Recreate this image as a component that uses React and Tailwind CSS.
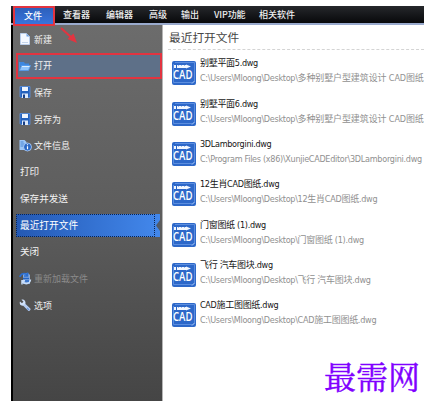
import React from 'react';

const menus = [
  { label: '查看器', width: 'w-[43px]' },
  { label: '编辑器', width: 'w-[43px]' },
  { label: '高级', width: 'w-[32px]' },
  { label: '输出', width: 'w-[33px]' },
  { label: 'VIP功能', width: 'w-[45px]', tracking: 'tracking-[-0.1px]' },
  { label: '相关软件', width: 'w-[50px]' },
];

const files = [
  { name: '别墅平面5.dwg', dir: 'C:\\Users\\Mloong\\Desktop\\', file: '多种别墅户型建筑设计 CAD图纸', tail: 'tracking-[-0.12px]' },
  { name: '别墅平面6.dwg', dir: 'C:\\Users\\Mloong\\Desktop\\', file: '多种别墅户型建筑设计 CAD图纸', tail: 'tracking-[-0.12px]' },
  { name: '3DLamborgini.dwg', dir: 'C:\\Program Files (x86)\\XunjieCADEditor\\', file: '3DLamborgini.dwg' },
  { name: '12生肖CAD图纸.dwg', dir: 'C:\\Users\\Mloong\\Desktop\\', file: '12生肖CAD图纸.dwg' },
  { name: '门窗图纸 (1).dwg', dir: 'C:\\Users\\Mloong\\Desktop\\', file: '门窗图纸 (1).dwg' },
  { name: '飞行 汽车图块.dwg', dir: 'C:\\Users\\Mloong\\Desktop\\', file: '飞行 汽车图块.dwg' },
  { name: 'CAD施工图图纸.dwg', dir: 'C:\\Users\\Mloong\\Desktop\\', file: 'CAD施工图图纸.dwg' },
];

const NewIcon = () => (
  <svg width="12" height="12" viewBox="0 0 12 12">
    <path d="M1.5 .5h6l3 3v8h-9z" fill="#f4f8ff" stroke="#b9cdea" />
    <path d="M7.5 .5v3h3z" fill="#6f9fe0" />
    <path d="M3 9.5h6" stroke="#c3d4ec" />
  </svg>
);

const OpenIcon = () => (
  <svg width="12" height="12" viewBox="0 0 12 12">
    <path d="M1 2h4l1 1.5h4V6H1z" fill="#3d87e0" />
    <path d="M.5 10.5V2M2.5 5.5h9l-2 5H.5z" fill="#8fc3fb" stroke="#4d97ec" strokeWidth=".8" />
    <path d="M3 6.5h7.5" stroke="#d9ecff" />
  </svg>
);

const SaveIcon = () => (
  <svg width="12" height="12" viewBox="0 0 12 12">
    <path d="M1 .5h10v11H2l-1-1z" fill="#2462bd" stroke="#5e9aec" strokeWidth=".7" />
    <path d="M3 1h6v4H3z" fill="#eef5ff" />
    <path d="M3 7.5h6V12H3z" fill="#dce9fb" />
    <path d="M4 8.5h2V12H4z" fill="#173f86" />
  </svg>
);

const InfoIcon = () => (
  <svg width="13" height="13" viewBox="0 0 13 13">
    <path d="M.5 1h5l2 2v8h-7z" fill="#9dc6f7" />
    <path d="M1.5 3h3M1.5 5h4M1.5 7h3" stroke="#3677cb" strokeWidth=".8" />
    <circle cx="8.5" cy="8" r="4" fill="#2866c5" stroke="#b9d5fa" strokeWidth=".8" />
    <path d="M8.5 7.2v3M8.5 5.2v1.1" stroke="#fff" strokeWidth="1.2" />
  </svg>
);

const ReloadIcon = () => (
  <svg width="13" height="13" viewBox="0 0 13 13" fill="none">
    <path d="M4 1h5l2 2v9H4z" fill="#86a9dc" />
    <path d="M1 5C1.500 1.500 6 .5 8 3M8.500 .5V4H5" stroke="#2b6fd2" strokeWidth="1.700" />
    <path d="M11.500 7.500C11 12 6 13 3.500 9.500M3 12.500V8.800H6.500" stroke="#c8defa" strokeWidth="1.500" />
    <path d="M4 6.500h6M6 9h4" stroke="#2365c6" strokeWidth="1.400" />
  </svg>
);

const OptionsIcon = () => (
  <svg width="12" height="12" viewBox="0 0 12 12" fill="none">
    <path d="M4.500 5 10 10.300" stroke="#b4ccf2" strokeWidth="3" strokeLinecap="round" />
    <path d="M2.500.8 4.500 2.800 3 4.200 1 2.500C0 5 2 7.300 4.500 6.500L6.500 4.500C7 2 4.800 0 2.500.8z" fill="#cfe0fa" />
    <path d="M8 9 10 11" stroke="#6e98dc" strokeWidth="1.200" />
  </svg>
);

const CadIcon = () => (
  <svg width="24" height="24" viewBox="0 0 24 24" className="shrink-0">
    <rect width="24" height="24" rx="2" fill="#2d68c9" />
    <path d="M1.500 3v18.500h19M3 1.500h19.500V20" fill="none" stroke="#6898e4" strokeWidth=".8" />
    <path d="M20 22.500l2.500-2.500" stroke="#b5d0fa" />
    <path d="M2 4h2v3H2zM5 4h9v3H5zM14 3.500l5 2L14 7.500z" fill="#f3f8ff" />
    <path d="M6 4.500h1M9 4.500h1M12 4.500h1" stroke="#9dbdf0" />
    <text x="1" y="17.800" textLength="19.500" lengthAdjust="spacingAndGlyphs" fill="#fff" className="font-['Open_Sans',sans-serif] text-[12px] font-semibold">
      CAD
    </text>
  </svg>
);

const items = [
  { label: '新建', icon: <NewIcon /> },
  { label: '打开', icon: <OpenIcon />, open: true },
  { label: '保存', icon: <SaveIcon /> },
  { label: '另存为', icon: <SaveIcon /> },
  { label: '文件信息', icon: <InfoIcon /> },
  { label: '打印' },
  { label: '保存并发送' },
  { label: '最近打开文件', active: true },
  { label: '关闭' },
  { label: '重新加载文件', icon: <ReloadIcon />, disabled: true },
  { label: '选项', icon: <OptionsIcon /> },
];

const SidebarItem = ({ item }) => {
  if (item.active) {
    return (
      <div className="h-[26.6px] pl-[3px] pr-[2px] py-[2px]">
        <div className="relative flex h-full items-center bg-linear-to-r from-[#2459b4] to-[#4388ec] pl-1 text-[9.7px] text-white">
          <span className="absolute inset-y-0 left-0 right-[5px] border border-dotted border-[#0b2450]" />
          {item.label}
          <svg className="absolute right-0 top-0" width="4" height="23" viewBox="0 0 4 23">
            <path d="M4 6v11L0 11.500z" fill="#535a66" />
          </svg>
        </div>
      </div>
    );
  }

  return (
    <div
      className={`flex h-[26.6px] items-center ${item.open ? 'border-2 border-[#e23440] bg-[#5e7088] ml-[3px] pl-[1px]' : 'pl-[6px]'
        } ${item.disabled ? 'text-[#8b8b8b]' : 'text-[#f2f2f2]'}`}
    >
      {item.icon && <span className="w-[15px] shrink-0">{item.icon}</span>}
      <span className={item.icon ? 'text-[9px]' : 'pl-px text-[9.6px]'}>{item.label}</span>
    </div>
  );
};

const App = () => {
  return (
    <div className="h-[407px] w-[438px] overflow-hidden bg-white pl-[11px] pt-[6px] font-['DejaVu_Sans_Condensed','Noto_Sans_CJK_SC',sans-serif] whitespace-nowrap">
      <div className="relative flex h-[395px] w-[413px] flex-col overflow-hidden">
        <div className="flex h-[17px] shrink-0 items-center bg-linear-to-b from-[#26282c] to-[#08090b] text-[9px] font-medium leading-none text-[#eeeeee] font-['Noto_Sans_CJK_SC',sans-serif]">
          <div className="relative z-10 ml-[2px] mr-[8px] mt-[3px] flex h-[20px] w-[42px] shrink-0 items-center justify-center border-2 border-[#e23440] bg-linear-to-b from-[#2d60bb] to-[#3974dc] pb-[2px] pr-[2px] text-white">
            文件
          </div>
          {menus.map((menu) => (
            <span key={menu.label} className={`${menu.width} ${menu.tracking || ''} shrink-0`}>
              {menu.label}
            </span>
          ))}
        </div>
        <div className="h-[2px] shrink-0 bg-[#99aacd]" />

        <div className="flex min-h-0 flex-1">
          <div className="w-[152px] shrink-0 border-l-2 border-r border-l-black border-r-[#b5b5b5] bg-linear-to-b from-[#6c6c6c] via-[#5d5d5d] to-[#454545] pt-[1px] font-['Noto_Sans_CJK_SC',sans-serif] leading-none">
            {items.map((item) => (
              <SidebarItem key={item.label} item={item} />
            ))}
          </div>

          <div className="min-w-0 flex-1 overflow-hidden bg-white">
            <h1 className="ml-[5px] flex h-[25px] items-center border-b border-dashed border-[#d4d4d4] pl-px text-[11.7px] leading-none text-[#454545] font-['Noto_Sans_CJK_SC',sans-serif]">
              最近打开文件
            </h1>
            <div className="-mt-[5px]">
              {files.map((f) => (
                <div key={f.name} className="flex h-[40.35px] items-end pl-[9px]">
                  <CadIcon />
                  <div className="mb-[-1px] ml-1 flex flex-col leading-[15px]">
                    <span className="text-[9px] tracking-[-0.3px] text-[#151515]">{f.name}</span>
                    <span className="text-[9px] tracking-[-0.3px] text-[#909090]">
                      {f.dir}
                      <span className={f.tail || 'tracking-[-0.27px]'}>{f.file}</span>
                    </span>
                  </div>
                </div>
              ))}
            </div>
          </div>
        </div>

        {/* pointer from the file tab to the open entry */}
        <svg className="absolute left-[48px] top-[19px]" width="22" height="22" viewBox="0 0 22 22">
          <path d="M2 3 13 13" stroke="#e23440" strokeWidth="2" />
          <path d="M18 18 8.500 14 14.500 8.500z" fill="#e23440" />
        </svg>
      </div>

      <div className="absolute left-[324px] top-[353px] text-[32px] leading-[44px] text-[#8000ff] font-['Noto_Serif_CJK_SC','Liberation_Serif',serif] [-webkit-text-stroke:0.4px_#8000ff]">
        最需网
      </div>
    </div>
  );
};

export default App;
